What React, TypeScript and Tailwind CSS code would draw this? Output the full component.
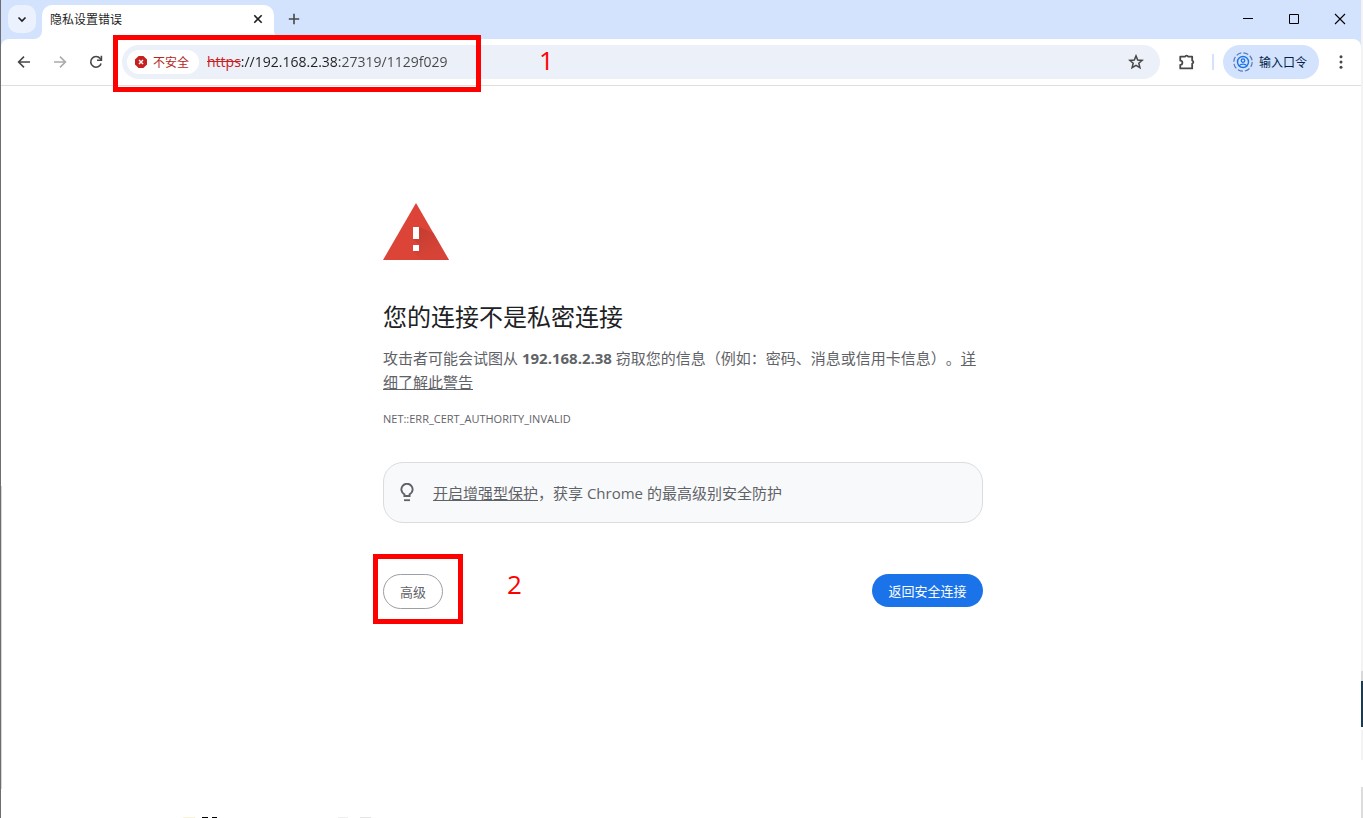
import { useState, type ReactNode } from "react";

const UI_FONT = "font-['Open_Sans','Noto_Sans_CJK_SC',sans-serif]";

const HOST = "192.168.2.38";

function Icon({ size = 16, className = "", children }: { size?: number; className?: string; children: ReactNode }) {
  return (
    <svg
      width={size}
      height={size}
      viewBox="0 0 16 16"
      fill="none"
      stroke="currentColor"
      strokeWidth="1.6"
      className={`shrink-0 ${className}`}
      aria-hidden="true"
    >
      {children}
    </svg>
  );
}

function TabStrip() {
  return (
    <header className="flex h-[39px] bg-[#d3e3fd] pl-[7px]">
      <button
        aria-label="搜索标签页"
        className="mt-[5px] flex h-7 w-7 items-center justify-center rounded-[10px] bg-[#ebf2fe] text-[#1f1f1f]"
      >
        <Icon>
          <path d="M4.5 6.5 8 10l3.5-3.5" />
        </Icon>
      </button>

      {/* Active tab, with the flared corners at its foot */}
      <div className="relative ml-[6px] mt-[5px] flex w-[232px] items-center rounded-t-[10px] bg-white pb-[6px] pl-2 pr-2">
        <svg width="8" height="8" viewBox="0 0 8 8" className="absolute -left-2 bottom-0" aria-hidden="true">
          <path d="M8 0v8H0a8 8 0 0 0 8-8Z" fill="#fff" />
        </svg>
        <svg width="8" height="8" viewBox="0 0 8 8" className="absolute -right-2 bottom-0" aria-hidden="true">
          <path d="M0 0v8h8a8 8 0 0 1-8-8Z" fill="#fff" />
        </svg>
        <span className="flex-1 pt-[2px] text-[12px] leading-4 text-[#1f1f1f]">隐私设置错误</span>
        <button aria-label="关闭标签页" className="text-[#1f1f1f]">
          <Icon>
            <path d="m4.3 4.3 7.4 7.4m0-7.4-7.4 7.4" />
          </Icon>
        </button>
      </div>

      <button aria-label="打开新的标签页" className="ml-3 flex h-[38px] items-center text-[#474747]">
        <Icon>
          <path d="M8 2.8v10.4M2.8 8h10.4" />
        </Icon>
      </button>

      <div className="-mr-[2px] ml-auto flex h-[38px] text-black">
        <button aria-label="最小化" className="flex w-[46px] items-center justify-center">
          <Icon>
            <path d="M3 7.5h10" strokeWidth="1" />
          </Icon>
        </button>
        <button aria-label="最大化" className="flex w-[46px] items-center justify-center">
          <Icon>
            <path d="M3.5 3.5h9v9h-9z" strokeWidth="1" />
          </Icon>
        </button>
        <button aria-label="关闭" className="flex w-[46px] items-center justify-center">
          <Icon>
            <path d="m3 3 10 10m0-10L3 13" strokeWidth="1.1" />
          </Icon>
        </button>
      </div>
    </header>
  );
}

function AddressBar() {
  const [address, setAddress] = useState(`://${HOST}:27319/1129f029`);

  return (
    <div className="relative ml-[18px] flex h-[34px] flex-1 items-center rounded-full bg-[#ecf0f9] pl-[5px] pr-4">
      <button className="flex h-6 w-[72px] items-center gap-[6px] rounded-full bg-white pl-2 text-[12px] leading-4 text-[#b3261e]">
        <svg width="12" height="12" viewBox="0 0 12 12" className="shrink-0" aria-hidden="true">
          <path d="M3.6 0h4.8L12 3.6v4.8L8.4 12H3.6L0 8.4V3.6Z" fill="#c5221f" />
          <path d="m4 4 4 4m0-4L4 8" stroke="#fff" strokeWidth="1.4" />
        </svg>
        <span className="pt-[2px]">不安全</span>
      </button>
      <label htmlFor="address" className="ml-2 text-[14px] leading-5 text-[#c5221f] line-through">
        https
      </label>
      <input
        id="address"
        value={address}
        onChange={(e) => setAddress(e.target.value)}
        className="h-5 min-w-0 flex-1 bg-[linear-gradient(90deg,#1f1f1f_97px,#474747_97px)] bg-clip-text text-[14px] leading-5 text-transparent caret-black outline-none"
      />
      <button aria-label="为此标签页添加书签" className="text-[#474747]">
        <Icon>
          <path d="m8 1.9 1.7 4.2 4.5.3-3.4 2.9 1.1 4.3L8 11.3l-3.9 2.3 1.1-4.3-3.4-2.9 4.5-.3Z" strokeWidth="1.5" />
        </Icon>
      </button>

      {/* Step 1 */}
      <div className="pointer-events-none absolute -left-[9px] -top-[10px] h-[57px] w-[368px] border-5 border-[#ff0000]" />
      <span className="pointer-events-none absolute left-[417px] -top-px text-[26px] leading-8 text-[#ff0000]">1</span>
    </div>
  );
}

function Toolbar() {
  return (
    <div className="bg-[#d3e3fd]">
      <nav className="flex h-[47px] items-center rounded-t-lg border-b border-[#dedede] bg-white pl-[15px] pr-3 text-[#474747]">
        <button aria-label="返回">
          <Icon>
            <path d="M14 8H2.8M8 2.6 2.6 8 8 13.4" />
          </Icon>
        </button>
        <button aria-label="前进" disabled className="ml-5 text-[#aaaaaa]">
          <Icon>
            <path d="M2 8h11.2M8 2.6 13.4 8 8 13.4" />
          </Icon>
        </button>
        <button aria-label="重新加载" className="ml-5">
          <Icon>
            <path d="M13.1 9.4A5.3 5.3 0 1 1 12.2 4.6L13.4 6" />
            <path d="M13.4 1.8v4.4H9" />
          </Icon>
        </button>

        <AddressBar />

        <button aria-label="扩展程序" className="ml-[18px]">
          <Icon size={18}>
            <path
              d="M2 3.2h4.4a1.3 1.3 0 0 1 2.5 0h3.7v3.5a1.4 1.4 0 0 1 0 2.7v4.3H2v-3.2a1.9 1.9 0 0 0 0-3.8Z"
              strokeLinejoin="round"
            />
          </Icon>
        </button>
        <div className="ml-4 h-4 w-[2px] bg-[#d3e3fd]" />
        <button className="ml-[9px] flex h-[34px] w-24 items-center gap-[6px] rounded-full bg-[#d3e3fd] pl-[10px] text-[12px] leading-4 text-[#041e49]">
          <svg width="20" height="20" viewBox="0 0 20 20" fill="none" className="shrink-0" aria-hidden="true">
            <circle cx="10" cy="10" r="9.2" stroke="#5b7cb8" strokeWidth="1.2" strokeDasharray="5.2 2.03" />
            <circle cx="10" cy="10" r="5.5" stroke="#1a73e8" strokeWidth="1.4" />
            <circle cx="10" cy="8.6" r="1.8" stroke="#1a73e8" strokeWidth="1.3" />
            <path d="M6.2 13.7c1.8-2 5.8-2 7.6 0" stroke="#1a73e8" strokeWidth="1.3" />
          </svg>
          <span className="pt-[2px]">输入口令</span>
        </button>
        <button aria-label="自定义及控制" className="ml-[14px]">
          <Icon>
            <g fill="currentColor" stroke="none">
              <circle cx="8" cy="2.7" r="1.5" />
              <circle cx="8" cy="8" r="1.5" />
              <circle cx="8" cy="13.3" r="1.5" />
            </g>
          </Icon>
        </button>
      </nav>
    </div>
  );
}

function WarningIcon() {
  return (
    <svg width="66" height="57" viewBox="0 0 66 57" aria-hidden="true">
      <defs>
        <linearGradient id="shade" x1="0.2" y1="0.1" x2="0.6" y2="0.8">
          <stop offset="0" stopColor="#b83a2e" />
          <stop offset="1" stopColor="#d34336" />
        </linearGradient>
      </defs>
      <path d="M33 0 66 57H0Z" fill="#db4437" />
      <path d="m36 24 14.5 6L66 57H39l-9-9 6-6-6-6Z" fill="url(#shade)" opacity="0.6" />
      <path d="M30 24h6v12h-6zM30 42h6v6h-6z" fill="#fff" />
    </svg>
  );
}

function PrivacyError() {
  return (
    <main className="flex-1 bg-white pl-1 pt-[117px] text-[15px] leading-6 text-[#5f6368]">
      <div className="mx-auto max-w-[600px]">
        <WarningIcon />
        <h1 className="mt-[41px] text-[24px] leading-8 text-[#202124]">您的连接不是私密连接</h1>
        <p className="mt-[13px] [text-spacing-trim:space-all]">
          攻击者可能会试图从 <strong className="font-bold">{HOST}</strong> 窃取您的信息（例如：密码、消息或信用卡信息）。
          <a href="#learn-more" className="underline">
            详细了解此警告
          </a>
        </p>
        <p className="mt-[17px] text-[11px] leading-4">NET::ERR_CERT_AUTHORITY_INVALID</p>

        <div className="mt-[35px] flex h-[61px] items-center rounded-[20px] border border-[#dadce0] bg-[#f8f9fa] pl-[15px]">
          <svg width="16" height="20" viewBox="0 0 16 20" fill="none" className="shrink-0" aria-hidden="true">
            <path
              d="M5.4 13v-1.7A5.6 5.6 0 1 1 10.6 11.3V13Z"
              stroke="#5f6368"
              strokeWidth="1.9"
            />
            <path d="M5 17.2h6" stroke="#5f6368" strokeWidth="1.8" />
          </svg>
          <p className="ml-[18px]">
            <a href="#enhanced-protection" className="underline">
              开启增强型保护
            </a>
            ，获享 Chrome 的最高级别安全防护
          </p>
        </div>

        <div className="mt-[51px] flex items-start justify-between">
          <div className="relative">
            <button className="block h-[35px] w-[60px] rounded-full border border-[#9aa0a6] bg-white text-[13px] leading-5">
              高级
            </button>
            {/* Step 2 */}
            <div className="pointer-events-none absolute -left-[10px] -top-5 h-[70px] w-[90px] border-5 border-[#ff0000]" />
            <span className="pointer-events-none absolute left-[124px] -top-[6px] text-[26px] leading-8 text-[#ff0000]">
              2
            </span>
          </div>
          <button className="h-[33px] w-[111px] rounded-full bg-[#1a73e8] text-[13px] leading-5 text-white">
            返回安全连接
          </button>
        </div>
      </div>
    </main>
  );
}

// Slivers of the desktop that show past the window's frame
function LeftEdge() {
  return <div className="w-px bg-[#6e6e6e]" />;
}

function RightEdge() {
  return (
    <div className="flex w-[2px] flex-col bg-white">
      <div className="h-[671px] bg-[#f3f3f3]" />
      <div className="h-[10px] bg-[#d9d9d9]" />
      <div className="h-[46px] bg-[#1e3a4f]" />
      <div className="mt-[3px] h-[30px] bg-[#f3f3f3]" />
      <div className="mt-[27px] flex-1 bg-[#dcdcdc]" />
    </div>
  );
}

export default function App() {
  return (
    <div lang="zh-CN" className={`relative flex min-h-screen bg-white ${UI_FONT}`}>
      <LeftEdge />
      <div className="flex min-w-0 flex-1 flex-col">
        <TabStrip />
        <Toolbar />
        <PrivacyError />
        <div className="flex h-px pl-[182px]">
          <div className="w-3 bg-[#fbf3d6]" />
          <div className="ml-[7px] w-[6px] bg-black" />
          <div className="ml-1 w-[5px] bg-black" />
          <div className="ml-[121px] w-[10px] bg-[#eeeeee]" />
          <div className="ml-3 w-[11px] bg-[#e4e4e4]" />
        </div>
      </div>
      <RightEdge />
      <div className="absolute bottom-[29px] left-px h-[303px] w-px bg-[#d6d6d6]" />
    </div>
  );
}
